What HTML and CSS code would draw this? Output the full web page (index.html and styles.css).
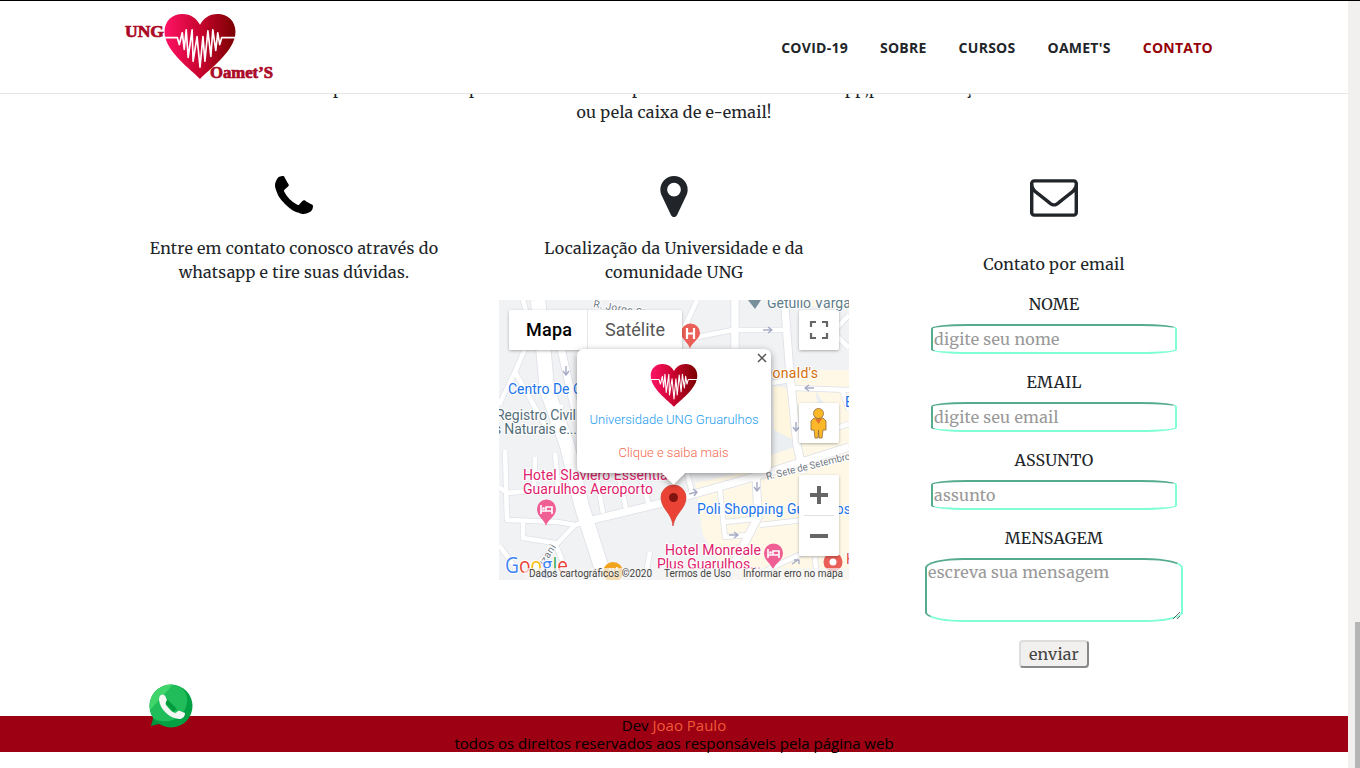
FILE: index.html
```html
<!DOCTYPE html>
<html lang="pt-br">
<head>
<meta charset="utf-8">
<title>UNG Oamet'S</title>
<link rel="stylesheet" href="styles.css">
</head>
<body>
<svg width="0" height="0" class="defs">
  <defs>
    <linearGradient id="heartFill" x1="0" x2="1" y1="0" y2="0"><stop offset="0" stop-color="#ff1266"/><stop offset=".5" stop-color="#c8042f"/><stop offset="1" stop-color="#790000"/></linearGradient>
    <symbol id="heart" viewBox="0 0 72 68">
      <path d="M36 66 C28 57 0 38 0 18 C0 7 8 0 18 0 C27 0 33 5 36 11 C39 5 45 0 54 0 C64 0 72 7 72 18 C72 38 44 57 36 66Z" fill="url(#heartFill)"/>
      <path d="M0 24H13L15 31L18 19L20 36L22 16L24 44L28 16L29 48L33 23L36 54L39 23L41 48L44 17L47 43L49 16L52 37L54 19L56 31L58 24H72" fill="none" stroke="#fff" stroke-width="1.7" stroke-linejoin="round"/>
    </symbol>
  </defs>
</svg>
<div class="window">
  <div class="page">
    <header class="navbar">
      <svg class="logo" viewBox="120 5 160 80" width="160" height="80">
        <use href="#heart" x="164" y="14" width="72" height="67"/>
        <g class="logo-text"><text x="125" y="37" textLength="39" lengthAdjust="spacingAndGlyphs">UNG</text>
        <text x="210" y="78" textLength="63" lengthAdjust="spacingAndGlyphs">Oamet’S</text></g>
      </svg>
      <nav class="menu"><a>COVID-19</a><a>SOBRE</a><a>CURSOS</a><a>OAMET'S</a><a class="active">CONTATO</a></nav>
    </header>
    <main>
      <div class="intro">
        <div class="intro-line"><span class="w1">por</span><span class="w2">para</span><span class="w3">pelo</span><span class="w4">pp,p</span><span>ç</span></div>
        <p>ou pela caixa de e-email!</p>
      </div>
      <section class="columns">
        <div class="col">
          <div class="icon"><svg width="38" height="38" viewBox="0 -1280 1408 1408"><path class="phone" transform="scale(1 -1) translate(0 -128)" d="M1408 296q0 -27 -10 -70.5t-21 -68.5q-21 -50 -122 -106q-94 -51 -186 -51q-27 0 -53 3.5t-57.5 12.5t-47 14.5t-55.5 20.5t-49 18q-98 35 -175 83q-127 79 -264 216t-216 264q-48 77 -83 175q-3 9 -18 49t-20.5 55.5t-14.5 47t-12.5 57.5t-3.5 53q0 92 51 186q56 101 106 122q25 10 68.5 21t70.5 10q14 0 21 -3q18 -6 53 -76q11 -19 30 -54t35 -63.5t31 -53.5q3 -4 17.5 -25t21.5 -35.5t7 -28.5q0 -20 -28.5 -50t-62 -55t-62 -53t-28.5 -46q0 -9 5 -22.5t8.5 -20.5t14 -24t11.5 -19q76 -137 174 -235t235 -174q2 -1 19 -11.5t24 -14t20.5 -8.5t22.5 -5q18 0 46 28.5t53 62t55 62t50 28.5q14 0 28.5 -7t35.5 -21.5t25 -17.5q25 -15 53.5 -31t63.5 -35t54 -30q70 -35 76 -53q3 -7 3 -21z"/></svg></div>
          <p>Entre em contato conosco através do<br>whatsapp e tire suas dúvidas.</p>
        </div>
        <div class="col">
          <div class="icon"><svg width="28" height="41" viewBox="0 -1408 1024 1536"><path transform="scale(1 -1)" d="M768 896q0 106 -75 181t-181 75t-181 -75t-75 -181t75 -181t181 -75t181 75t75 181zM1024 896q0 -109 -33 -179l-364 -774q-16 -33 -47.5 -52t-67.5 -19t-67.5 19t-46.5 52l-365 774q-33 70 -33 179q0 212 150 362t362 150t362 -150t150 -362z"/></svg></div>
          <p>Localização da Universidade e da<br>comunidade UNG</p>
          <svg class="map" viewBox="499 300 350 280" width="350" height="280">
            <defs>
              <filter id="sh" x="-20%" y="-20%" width="140%" height="150%"><feDropShadow dx="0" dy="1" stdDeviation="1.5" flood-opacity=".3"/></filter>
              <filter id="sh2" x="-20%" y="-20%" width="140%" height="150%"><feDropShadow dx="0" dy="2" stdDeviation="3.5" flood-opacity=".4"/></filter>
              <g id="thin"><path d="M523 300L532 332L515 372L499 405M515 372L545 425M697 300L687 322L672 348M697 337L733 330H787M803 308L785 300M849 315L833 332L818 300M833 332L849 348M793 388L849 390M842 390L849 410M772 383L790 380M499 487L507 493L572 487M505 450L507 520L558 522L575 525L535 567L548 580M535 457L534 490M555 453L558 487M523 520V538L555 543L562 560M499 545L515 567M575 525L592 520M662 503L687 493M597 480L603 513M618 475L626 508M640 475L649 505M692 492L687 473M720 490L725 537L747 535M725 522L754 519M760 525L803 520M750 580L767 570L803 553M815 557L817 580M645 580L650 552M799 440L849 424M562 405L550 428"/></g>
              <g id="wide"><path d="M735 300V348M785 308L790 375L797 445L803 473M592 520L662 503L733 483L767 473L849 447M756 473L758 517L738 556L725 580M558 335L567 375L575 410"/></g>
              <path id="main" d="M538 300L543 345L547 390L567 445L582 507L607 585"/>
            </defs>
            <rect x="499" y="300" width="350" height="280" fill="#f1f2f4"/>
            <path d="M771 370H849V580H730L703 535L695 483L771 466ZM803 300L849 301V309L811 306Z" fill="#fff8e7"/>
            <path d="M770 370L792 372L801 445L771 455ZM815 390L825 405 820 416Z" fill="#eceff2"/>
            <path d="M773 386L788 388L794 440L774 430Z" fill="#fff6df"/>
            <g fill="none" stroke-linejoin="round">
              <g stroke="#dde0e6"><use href="#thin" stroke-width="6"/><use href="#wide" stroke-width="9"/><use href="#main" stroke-width="16"/></g>
              <g stroke="#fff"><use href="#thin" stroke-width="4.6"/><use href="#wide" stroke-width="7.4"/><use href="#main" stroke-width="14.4"/></g>
              <path d="M566 366v8m-3-3l3 4 3-4M763 330h8m-3-3l4 3-4 3M814 388h-8m3-3l-4 3 4 3M796 422v8m-3-3l3 4 3-4M757 482v8m-3-3l3 4 3-4M689 494l7-2m-3-3l4 3-3 4M729 535h8m-3-3l4 3-4 3M792 564l6-4m-4 0h5v4" stroke="#a5abc4" stroke-width="1.4"/>
            </g>
            <g class="labels">
              <text class="street" transform="translate(593 307) rotate(10)">R. Jorge Street</text>
              <text class="street" transform="translate(767 480) rotate(-14)" textLength="87">R. Sete de Setembro</text>
              <text class="street" transform="translate(544 566) rotate(-57)">Izani</text>
              <text x="767" y="308" fill="#607d8b">Getúlio Vargas</text>
              <text x="508" y="394" fill="#1a73e8">Centro De Ciências</text>
              <text x="496" y="420" fill="#546e7a" textLength="80">Registro Civil</text>
              <text x="494" y="434" fill="#546e7a" textLength="83">s Naturais e...</text>
              <text x="763" y="378" fill="#d56e0c" textLength="55">Donald's</text>
              <text x="845" y="407" fill="#1a73e8">B</text>
              <text x="523" y="480" fill="#e0216b" textLength="148">Hotel Slaviero Essential</text>
              <text x="523" y="494" fill="#e0216b" textLength="130">Guarulhos Aeroporto</text>
              <text x="697" y="514" fill="#1a73e8" textLength="154">Poli Shopping Guarulhos</text>
              <text x="665" y="555" fill="#e0216b" textLength="96">Hotel Monreale</text>
              <text x="657" y="569" fill="#e0216b" textLength="104">Plus Guarulhos...</text>
              <text x="846" y="564" fill="#e0514a">H</text>
            </g>
            <path d="M748 300h13l-6 9z" fill="#78909c"/>
            <path d="M690 349c-1-6-9-10-9-16a9.300 9.300 0 0 1 19 0c0 6-9 10-10 16z" fill="#ea5f57"/>
            <path d="M687 328v11M694 328v11M687 333.500h7" stroke="#fff" stroke-width="2.200"/>
            <g id="bed"><path d="M546 526c-1-6-9-9-9-17a9.400 9.400 0 0 1 19 0c0 8-9 11-10 17z" fill="#ef5f94"/><path d="M541 505v9M541 511h11v3M546 507h6v4h-6z" stroke="#fff" stroke-width="1.600" fill="none"/><circle cx="543.500" cy="508.500" r="1.300" fill="#fff"/></g>
            <use href="#bed" x="227" y="44"/>
            <circle cx="613" cy="572" r="10" fill="#f2a41f"/><path d="M610 568v8M613 568v8M617 567v9" stroke="#fff" stroke-width="1.500"/>
            <circle cx="833" cy="562" r="9.500" fill="#ea5f57"/><circle cx="833" cy="562" r="3.500" fill="#fff"/>
            <g class="google"><text x="505" y="573" textLength="63" lengthAdjust="spacingAndGlyphs"><tspan fill="#4285f4">G</tspan><tspan fill="#ea4335">o</tspan><tspan fill="#fbbc05">o</tspan><tspan fill="#4285f4">g</tspan><tspan fill="#34a853">l</tspan><tspan fill="#ea4335">e</tspan></text></g>
            <rect x="524" y="568" width="325" height="12" fill="#f5f5f5" opacity=".7"/>
            <g class="legal"><text x="529" y="577" textLength="123">Dados cartográficos ©2020</text><text x="664" y="577" textLength="67">Termos de Uso</text><text x="743" y="577" textLength="100">Informar erro no mapa</text></g>
            <path d="M673 526C672 513 661 509 661 497.500a12.500 12.500 0 0 1 25 0C686 509 675 513 673 526z" fill="#ea4335" stroke="#d13a2e" stroke-width=".7"/><circle cx="673.500" cy="497.500" r="4.500" fill="#811411"/>
            <g filter="url(#sh)"><rect x="509" y="310" width="173" height="40" rx="2" fill="#fff"/></g>
            <path d="M587.500 310v40" stroke="#e6e6e6"/>
            <text class="tab on" x="526" y="336" textLength="46">Mapa</text><text class="tab" x="605" y="336" textLength="60">Satélite</text>
            <path filter="url(#sh2)" d="M585 349H763Q771 349 771 357V465Q771 473 763 473H685L673.500 484.500L662 473H585Q577 473 577 465V357Q577 349 585 349Z" fill="#fff"/>
            <use href="#heart" x="650" y="364" width="48" height="44"/>
            <path d="M758 354l8 8m0-8l-8 8" stroke="#555" stroke-width="1.500"/>
            <text class="info" x="589.500" y="424" fill="#1a9cf0" textLength="169">Universidade UNG Gruarulhos</text>
            <text class="info" x="618.500" y="457" fill="#f4694f" textLength="110">Clique e saiba mais</text>
            <g filter="url(#sh)" fill="#fff"><rect x="799" y="310" width="40" height="40" rx="2"/><rect x="799" y="403" width="40" height="40" rx="2"/><rect x="799" y="475" width="40" height="81" rx="2"/></g>
            <path d="M811 327v-5h5M822 322h5v5M827 333v5h-5M816 338h-5v-5" fill="none" stroke="#666" stroke-width="2.200"/>
            <path d="M804 515.500h30" stroke="#e0e0e0"/>
            <path d="M810 495h18M819 486v18M810 536h18" stroke="#666" stroke-width="4"/>
            <path d="M814 418h9l3 3v9h-3l-1 8h-3l-.5-8-.500 8h-3l-1-8h-3v-9z" fill="#fbb829" stroke="#8f6a3c" stroke-width=".8"/><circle cx="818.500" cy="413.500" r="5" fill="#fbb829" stroke="#8f6a3c" stroke-width=".8"/><path d="M815 419h7l-3.500 5z" fill="#e5762d"/>
          </svg>
        </div>
        <div class="col mail">
          <div class="icon"><svg width="48" height="38" viewBox="0 -1280 1792 1408"><path transform="scale(1 -1)" d="M1664 32v768q-32 -36 -69 -66q-268 -206 -426 -338q-51 -43 -83 -67t-86.500 -48.500t-102.500 -24.500h-1h-1q-48 0 -102.500 24.500t-86.500 48.500t-83 67q-158 132 -426 338q-37 30 -69 66v-768q0 -13 9.500 -22.500t22.500 -9.500h1472q13 0 22.500 9.500t9.500 22.500zM1664 1083v11v13.500t-0.500 13t-3 12.500t-5.500 9t-9 7.500t-14 2.500h-1472q-13 0 -22.500 -9.500t-9.500 -22.500q0 -168 147 -284q193 -152 401 -317q6 -5 35 -29.500t46 -37.500t44.500 -31.500t50.500 -27.500t43 -9h1h1q20 0 43 9t50.500 27.500t44.500 31.500t46 37.500t35 29.500q208 165 401 317q54 43 100.500 115.500t46.500 131.500zM1792 1120v-1088q0 -66 -47 -113t-113 -47h-1472q-66 0 -113 47t-47 113v1088q0 66 47 113t113 47h1472q66 0 113 -47t47 -113z"/></svg></div>
          <p>Contato por email</p>
          <form>
            <label>NOME</label><input type="text" placeholder="digite seu nome">
            <label>EMAIL</label><input type="text" placeholder="digite seu email">
            <label>ASSUNTO</label><input type="text" placeholder="assunto">
            <label>MENSAGEM</label><textarea placeholder="escreva sua mensagem"></textarea>
            <button type="button">enviar</button>
          </form>
        </div>
      </section>
    </main>
    <footer>Dev <a>Joao Paulo</a><br>todos os direitos reservados aos responsáveis pela página web</footer>
    <svg class="whatsapp" viewBox="0 0 44 44" width="44" height="44">
      <path d="M2 42L5 31Q15 39 18 38Z" fill="#00933c"/><circle cx="22" cy="22" r="21.500" fill="#00a043"/>
      <path d="M6 8A21 21 0 0 1 31 3Q39 8 38 18C37 32 22 42 5 35A22 22 0 0 1 6 8Z" fill="#20bd5a"/><path d="M1 26A21.500 21.500 0 0 1 24 .6Z" fill="#40d56b"/>
      <path d="M16 13L28 25L24 28L17 20Z" fill="#009b3d"/>
      <path d="M12 11C15 9 17 13 18 16C17 18 16 19 17 21C20 25 23 28 26 29C28 29 29 26 31 27L36 29C36 33 33 35 30 35C20 34 11 25 10 16Q10 12 12 11Z" fill="#f5f7f3"/>
    </svg>
  </div>
  <div class="scrollbar"><div class="thumb"></div></div>
</div>
</body>
</html>
```
FILE: styles.css
```css
* { box-sizing: border-box; }
body { margin: 0; overflow: hidden; background: #fff; color: #212529; font: 16px/24px Merriweather, "DejaVu Serif Condensed", "DejaVu Serif", serif; letter-spacing: .25px; }
.defs { position: absolute; }
.window { display: flex; width: 1360px; height: 768px; border-top: 1px solid #000; }
.page { position: relative; width: 1348px; display: flex; flex-direction: column; }
.scrollbar { width: 12px; background: #f1f0ef; display: flex; align-items: flex-end; justify-content: flex-end; }
.thumb { width: 5px; height: 146px; background: #b5b5b5; }
.navbar { position: relative; z-index: 2; height: 93px; background: #fff; border-bottom: 1px solid #e5e5e5; display: flex; justify-content: space-between; align-items: flex-start; padding: 4px 135px 0 120px; }
.logo-text { font: 700 17px "Liberation Serif", serif; fill: #ab0926; stroke: #ab0926; stroke-width: .7; letter-spacing: 0; }
.menu { display: flex; gap: 32px; margin-top: 31px; font: 700 14px/24px "Open Sans", sans-serif; letter-spacing: .26px; }
.menu .active { color: #940006; }
.intro { display: flow-root; height: 79px; text-align: center; }
.intro-line { height: 24px; margin-top: -18px; padding-left: 333px; display: flex; text-align: left; }
.w1 { width: 136px; } .w2 { width: 163px; } .w3 { width: 213px; } .w4 { width: 120px; }
p { margin: 0; white-space: nowrap; }
.columns { display: grid; grid-template-columns: repeat(3, 380px); justify-content: center; height: 543px; text-align: center; }
.col { display: flex; flex-direction: column; align-items: center; }
.icon { height: 63px; padding-top: 3px; fill: #212529; }
.icon svg { display: block; }
.phone { fill: #000; }
.map { display: block; margin-top: 16px; letter-spacing: 0; }
.labels { font: 14px Roboto, sans-serif; stroke: #fff; stroke-width: 2px; paint-order: stroke; }
.street { font-size: 10px; fill: #6f7782; letter-spacing: .4px; }
.google { font: 500 21px "Open Sans", sans-serif; stroke: #fff; stroke-width: 2px; paint-order: stroke; }
.legal { font: 10px Roboto, sans-serif; fill: #444; }
.tab { font: 18px Roboto, sans-serif; fill: #565656; }
.tab.on { font-weight: 500; fill: #000; }
.info { font: 300 13px Roboto, sans-serif; }
.mail .icon { height: 79px; padding-top: 6px; }
form { display: flex; flex-direction: column; align-items: center; margin-top: 16px; }
label { height: 24px; margin-bottom: 8px; }
input, textarea { font: inherit; letter-spacing: inherit; border: 2px inset aquamarine; border-radius: 15%; padding: 1px; background: #fff; outline: 0; }
input { width: 246px; height: 30px; margin-bottom: 16px; margin-top: 0; }
textarea { width: 258px; height: 64px; margin: 0 0 18px; padding-top: 0; }
::placeholder { color: #999; opacity: 1; }
button { width: 70px; height: 28px; padding: 0; font: inherit; letter-spacing: inherit; color: #444; background: #f1f0ef; border: 2px outset #ddd; border-radius: 4px; }
footer { height: 36px; background: #9c0012; color: #000; text-align: center; font: 15px/18px "Open Sans", sans-serif; letter-spacing: 0; }
footer a { color: #f05a38; }
.whatsapp { position: absolute; z-index: 3; left: 149px; top: 683px; }
```
